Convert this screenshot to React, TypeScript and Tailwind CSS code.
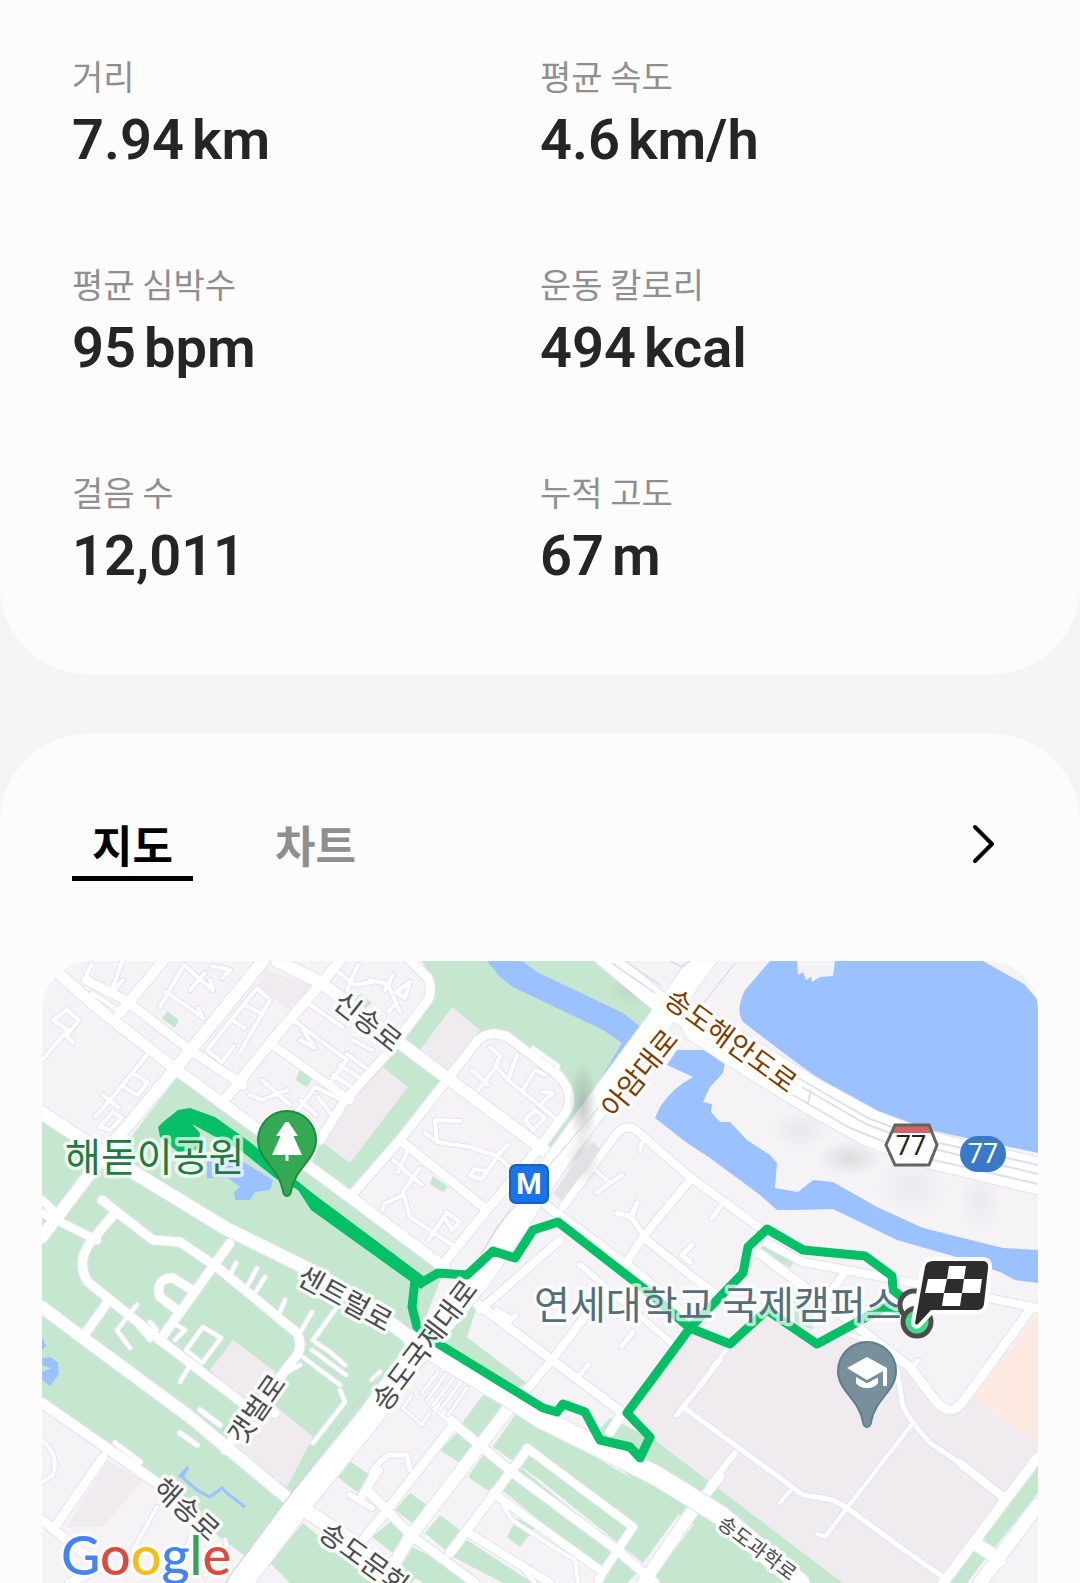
import { useState } from 'react';

type Tab = '지도' | '차트';

type Stat = { label: string; value: string; unit?: string };

const stats: Stat[] = [
  { label: '거리', value: '7.94', unit: 'km' },
  { label: '평균 속도', value: '4.6', unit: 'km/h' },
  { label: '평균 심박수', value: '95', unit: 'bpm' },
  { label: '운동 칼로리', value: '494', unit: 'kcal' },
  { label: '걸음 수', value: '12,011' },
  { label: '누적 고도', value: '67', unit: 'm' },
];

const tabs: Tab[] = ['지도', '차트'];

// Areas, drawn in this order
const parks = [
  'M42 1118L112 1162L177 1077L445 1268L415 1345L250 1560L42 1403Z',
  'M422 961H603L655 1003L660 1020L560 1160L545 1150L570 1110Q578 1090 558 1073L506 1034L480 1038L420 1053L403 1043L430 1000L432 980Z',
  'M383 1057L400 1047L447 1080L350 1200L310 1167L322 1140Z',
  'M478 1303L467 1337L527 1383L513 1390L440 1340L455 1305Z',
  'M610 1418L655 1440L710 1482L843 1583H790L655 1500L590 1440Z',
  'M483 1395L503 1403L480 1440L462 1423Z',
  'M517 1412L683 1508L643 1563L540 1480L493 1447Z',
  'M520 1467L617 1547L600 1570L502 1490Z',
  'M457 1433L483 1452L467 1468L440 1450Z',
  'M483 1455L507 1473L490 1492L468 1477Z',
  'M410 1493L430 1507L415 1525L395 1510Z',
  'M440 1515L460 1530L445 1550L425 1533Z',
  'M390 1522L408 1533L393 1553L372 1537Z',
  'M413 1547L480 1583H390Z',
  'M467 1540L533 1583H503L453 1557Z',
  'M517 1518L535 1528L520 1547L507 1537Z',
  'M617 1557L637 1573L627 1583H603Z',
  'M697 1520L710 1513L797 1583H650Z',
  'M303 1523L327 1543L380 1583H290L270 1563Z',
  'M1038 1460L982 1537L993 1550L1038 1493Z',
  'M977 1548L988 1555L967 1583H943Z',
  'M768 1238L797 1257L790 1268L760 1250Z',
  'M793 1292L815 1310L812 1330L795 1322Z',
  'M167 1011L179 1020L175 1028L162 1019Z',
  'M300 1070L312 1079L307 1087L295 1080Z',
  'M433 1176L448 1187L443 1192L430 1184Z',
  'M348 1460L370 1475L358 1493L338 1477Z',
  'M360 994L372 1003L366 1008L355 1000Z',
];

const greyBlocks = [
  'M265 970L312 985L290 1010L257 985Z',
  'M383 1067L408 1087L350 1163L322 1142L345 1108Z',
  'M452 1007L480 1030L447 1072L420 1050Z',
  'M233 1340L277 1373L243 1403L210 1370Z',
  'M277 1407L313 1437L287 1487L230 1450L243 1420Z',
  'M107 1460L143 1480L103 1527L67 1527Z',
  'M690 1333L730 1345L767 1313L817 1345L860 1333L910 1367L935 1400Q950 1415 960 1405L973 1397L1038 1445V1457L943 1583H843L655 1440L627 1413Z',
];

const water = [
  'M487 961H522L537 972L623 1013L647 1032L630 1053L607 1080L601 1078L622 1043L603 1030L513 987L500 977Z',
  'M770 961L745 990Q735 1010 743 1022L793 1060L853 1103L890 1120L943 1133L1038 1153V1000L1024 984L983 961Z',
  'M677 1050H720L725 1060L723 1073L710 1087L703 1102L712 1104L711 1112L720 1122H730L747 1140L770 1155L777 1163L775 1188L798 1192L813 1180L833 1182L877 1207L923 1228L1003 1248L1038 1250V1283L1015 1280L1000 1272L960 1258L897 1240L833 1209L797 1210H777L760 1195L710 1158L687 1143L655 1118L660 1107Q672 1088 693 1077L667 1065Z',
  'M207 1160L213 1155L240 1160L273 1180L270 1190L255 1192L250 1200H235L234 1192L240 1187L228 1178H207Z',
  'M42 1337L46 1346L42 1350ZM42 1358L50 1357L58 1362L59 1374L50 1386L42 1380V1372L51 1368L42 1365Z',
  'M388 1250L396 1254V1258L388 1254Z',
];

// [path, width]
const roads: [string, number][] = [
  // small streets
  ['M42 1060L68 1030L53 1020L67 1010L79 1020L66 1036L73 1043', 4],
  ['M100 1127L112 1112L122 1118L110 1130ZM95 1117L110 1100L147 1055M125 1088L138 1095L148 1082L132 1073M103 1095L118 1107', 4],
  ['M92 964L86 976L110 995L123 980M92 993L118 1010M122 962L112 990', 4],
  ['M182 968L160 1007M165 992L187 1006L203 1018L198 1008M184 965L195 975L213 990L210 980M190 990L205 973M212 966L230 970L222 978', 4],
  ['M207 1050L257 988L270 1000L240 1052M207 1050L222 1062L234 1046M232 1020L245 1028M243 1004L262 1014', 4],
  ['M308 1003L342 1027M293 1020L347 1060L330 1083M303 1030L315 1048L300 1040M333 1075L350 1086M340 1065L360 1078M347 1054L366 1068M353 1040L372 1050', 4],
  ['M250 1095L262 1100L287 1090M262 1080L290 1105M293 1117L315 1087L342 1100M300 1100L316 1115M318 1097L330 1113', 4],
  ['M333 968L355 985L372 982M347 990L358 965M370 980L388 984L400 1012M393 975L385 990M396 992L410 982L405 998ZM388 1012L395 1005', 4],
  ['M490 1047L500 1056L495 1068L478 1090M472 1070L488 1085M495 1065L508 1080L555 1118M517 1055L508 1080M523 1090L535 1070L545 1075M540 1105L553 1093L542 1092M525 1120L535 1110L545 1118L533 1130Z', 4],
  ['M533 1048L558 1066L556 1074', 4],
  ['M425 1133L437 1142L435 1120L460 1121M437 1142L470 1147L497 1156L515 1172M508 1145L496 1157M495 1160L482 1179L470 1176L474 1169L485 1171', 4],
  ['M393 1160L422 1185M408 1150L398 1172M420 1168L403 1192L410 1217L455 1247M403 1195L384 1204L382 1210M446 1212L460 1222L452 1230L446 1220M445 1216L428 1240', 4],
  ['M593 1168L610 1183L622 1175M610 1183L596 1193M642 1143L640 1150', 4],
  ['M617 1213L631 1217L637 1203M631 1217L645 1237M712 1218L720 1207M690 1262L682 1255L692 1245', 5],
  ['M516 1315L507 1323L497 1310L510 1318M588 1365L578 1377M633 1332L622 1346', 5],
  ['M137 1305L117 1330L130 1348M137 1305L128 1315L150 1340M150 1322L157 1330', 4],
  ['M203 1327L221 1338L202 1363L186 1350ZM175 1340L185 1330L172 1322M190 1365L180 1382', 4],
  ['M303 1357L340 1385M312 1350L346 1375M315 1342L330 1352L345 1365M288 1372L300 1365', 4],
  ['M340 1390L345 1402L313 1443', 4],
  ['M257 1268L247 1287M265 1277L255 1293M236 1263L230 1275M285 1300L280 1312M312 1312L300 1333M335 1310L313 1340', 4],
  ['M200 1410L220 1425M180 1433L197 1445M115 1443L140 1462L136 1468', 5],
  ['M42 1440Q60 1455 53 1475L42 1482', 4],
  ['M157 1507L133 1550M193 1533L170 1583M225 1540Q232 1560 205 1575', 4],
  ['M372 1483L372 1470L388 1455L407 1455L410 1470', 5],
  ['M372 1380L380 1372M360 1495L380 1460', 4],
  ['M503 1505L512 1520L550 1545L575 1560L578 1583M490 1547L515 1560L535 1583', 4],
  // campus paths
  ['M720 1360L677 1415M683 1407L803 1495L833 1500L847 1508L900 1547L943 1577', 5],
  ['M790 1491L780 1503M913 1423L847 1508L825 1537L818 1534', 4],
  ['M897 1370L903 1407L913 1423L930 1443L960 1463', 5],
  ['M730 1345L712 1368M845 1333L880 1345M912 1368L918 1360', 4],
  ['M960 1463L1003 1497', 8],
  ['M735 1453L710 1485', 6],
  // blocks
  ['M60 975L100 1010L173 1067L350 1197L445 1268', 11],
  ['M86 980L125 1000L190 1050L243 1085', 9],
  ['M263 961L177 1067L113 1143L42 1237', 12],
  ['M163 961L120 1013', 10],
  ['M340 961L270 1043L227 1097', 10],
  ['M277 961L320 982L400 1043L447 1078L540 1147L560 1163', 12],
  ['M408 958L428 978Q433 990 428 1000L390 1050L343 1103L320 1140', 9],
  ['M270 1043L350 1100', 8],
  ['M350 1197L400 1140L447 1080L478 1040Q490 1030 506 1036L558 1075Q576 1095 566 1112L540 1147L487 1210L440 1268', 9],
  ['M400 1140L487 1210', 9],
  ['M563 1207L617 1133Q627 1123 637 1131L690 1177L760 1228', 8],
  ['M690 1180L643 1237L627 1262', 8],
  ['M543 1203L643 1277L690 1320', 9],
  ['M643 1237L690 1275L720 1297', 8],
  ['M470 1298L552 1360L623 1413L610 1432', 9],
  ['M560 1240L480 1310M605 1290L552 1360L505 1415', 8],
  ['M580 1265L680 1350', 6],
  ['M740 1270L755 1250L855 1325L910 1367L935 1400Q950 1418 962 1403L1030 1310', 9],
  ['M767 1243L803 1262L883 1277L1038 1308M843 1275L825 1300', 8],
  ['M720 1297L680 1345', 8],
  ['M515 1400L410 1537L383 1583', 12],
  ['M455 1423L387 1510L363 1540', 9],
  ['M527 1450L450 1553', 9],
  ['M430 1400L453 1423L513 1473L617 1550L655 1583', 9],
  ['M527 1448L633 1527L598 1580', 8],
  ['M493 1493L600 1570', 8],
  ['M370 1493L413 1537L475 1583', 9],
  ['M467 1532L550 1583', 8],
  ['M693 1510L643 1583', 12],
  ['M720 1477L697 1505', 9],
  ['M1038 1457L943 1583', 10],
  ['M1038 1505L980 1583M975 1543L1000 1560', 13],
  ['M42 1307L83 1338L190 1417L290 1500', 12],
  ['M115 1213L92 1240Q75 1262 88 1282L160 1340L245 1405L275 1413', 9],
  ['M42 1213L97 1240M60 1217L42 1200', 8],
  ['M102 1200L127 1220L153 1240L180 1242L217 1267L297 1333Q303 1345 297 1355L225 1450', 9],
  ['M230 1243L160 1340M107 1303L83 1337', 9],
  ['M177 1310L160 1297Q155 1278 173 1278L192 1290', 9],
  ['M42 1403L157 1483L190 1513', 10],
  ['M103 1457L53 1530M42 1520L100 1567L70 1583', 9],
  ['M350 1495L372 1508M360 1500L380 1470', 6],
];

const mainRoads: [string, number][] = [
  ['M42 1113L80 1138L130 1170L225 1228L310 1270L360 1300L413 1340', 13],
  ['M413 1340L505 1395L540 1418L655 1475L720 1515L800 1583', 19],
  ['M295 1503L350 1540L400 1583', 14],
  ['M603 955L663 1005L710 1030', 20],
  ['M700 1025L745 1055L810 1095L870 1128L930 1150L1038 1176', 36],
  ['M710 950L660 1020L590 1115L550 1170L515 1225L480 1277L413 1357L370 1417L297 1507L240 1583', 24],
];

type MapLabel = { text: string; x: number; y: number; angle: number; size: number; color: string };

const mapLabels: MapLabel[] = [
  { text: '신송로', x: 369, y: 1020, angle: 38, size: 28, color: '#4a4c52' },
  { text: '센트럴로', x: 346, y: 1297, angle: 29, size: 28, color: '#4a4c52' },
  { text: '송도국제대로', x: 423, y: 1344, angle: -53, size: 28, color: '#4a4c52' },
  { text: '갯벌로', x: 255, y: 1408, angle: -55, size: 28, color: '#4a4c52' },
  { text: '해송로', x: 188, y: 1508, angle: 42, size: 28, color: '#4a4c52' },
  { text: '송도문화로', x: 376, y: 1565, angle: 36, size: 28, color: '#4a4c52' },
  { text: '송도과학로', x: 758, y: 1547, angle: 37, size: 20, color: '#4a4c52' },
  { text: '송도해안도로', x: 732, y: 1039, angle: 36, size: 28, color: '#7b3f00' },
  { text: '아암대로', x: 638, y: 1072, angle: -51, size: 28, color: '#7b3f00' },
];

const googleLetters = [
  ['G', '#4384f4'],
  ['o', '#dd4b3e'],
  ['o', '#f5bc1a'],
  ['g', '#4384f4'],
  ['l', '#35a456'],
  ['e', '#dd4b3e'],
];

const pinPath = 'M0 56C-2 56-4 54-4 51C-8 28-29 20-29 0A29 29 0 0 1 29 0C29 20 8 28 4 51C4 54 2 56 0 56Z';

const RoadLayer = ({ items }: { items: [string, number][] }) => (
  <g fill="none" strokeLinecap="round" strokeLinejoin="round">
    {items.map(([d, w]) => (
      <path key={d} d={d} stroke="#e1e4ed" strokeWidth={w + 2} />
    ))}
    {items.map(([d, w]) => (
      <path key={d} d={d} stroke="#ffffff" strokeWidth={w} />
    ))}
  </g>
);

const RouteMap = () => (
  <svg
    viewBox="42 961 996 622"
    role="img"
    aria-label="운동 경로 지도"
    className="block w-full rounded-t-[50px] font-['Noto_Sans_CJK_KR',sans-serif]"
  >
    <defs>
      <radialGradient id="hill">
        <stop offset="0" stopColor="#808a86" stopOpacity="0.45" />
        <stop offset="1" stopColor="#808a86" stopOpacity="0" />
      </radialGradient>
    </defs>
    <rect x="42" y="961" width="996" height="622" fill="#f6f3f7" />
    <path d={parks.join('')} fill="#c6e7cf" />
    <path d={greyBlocks.join('')} fill="#efebef" />
    <path d="M1038 1312L973 1397L1038 1445Z" fill="#fdeae3" />
    <path d={water.join('')} fill="#9cc1ff" />
    <path d="M797 961L798 975L803 972L806 980L811 977L812 982L820 977L833 976L835 961Z" fill="#f3f3f5" />
    <path
      d="M179 1477L188 1467L182 1477L197 1490L210 1497L222 1488L228 1494L245 1507"
      fill="none"
      stroke="#9cc1ff"
      strokeWidth="3"
    />

    <ellipse cx="800" cy="1130" rx="30" ry="20" fill="url(#hill)" opacity="0.25" />
    <ellipse cx="850" cy="1158" rx="32" ry="18" fill="url(#hill)" opacity="0.5" />
    <ellipse cx="912" cy="1187" rx="36" ry="32" fill="url(#hill)" opacity="0.2" />
    <ellipse cx="980" cy="1200" rx="22" ry="32" fill="url(#hill)" opacity="0.2" />
    <ellipse cx="633" cy="991" rx="26" ry="14" fill="url(#hill)" opacity="0.4" />

    <RoadLayer items={roads} />
    {/* Parking lot */}
    <g fill="none" strokeLinecap="round">
      <path
        d="M438 1372L422 1393M446 1374L427 1400M454 1378L433 1405M461 1382L440 1410M467 1388L448 1415M412 1395L403 1408L422 1425L430 1412"
        stroke="#e1e4ed"
        strokeWidth="5"
      />
      <path
        d="M438 1372L422 1393M446 1374L427 1400M454 1378L433 1405M461 1382L440 1410M467 1388L448 1415M412 1395L403 1408L422 1425L430 1412"
        stroke="#ffffff"
        strokeWidth="3"
      />
    </g>

    <RoadLayer items={mainRoads} />
    <ellipse cx="583" cy="1105" rx="15" ry="44" fill="url(#hill)" />
    <ellipse cx="583" cy="1160" rx="18" ry="26" fill="url(#hill)" opacity="0.7" />
    <path d="M562 1200L553 1194L580 1155L594 1142L600 1150Z" fill="#e2e2e4" />
    <g stroke="#dfe1ea" strokeWidth="2" fill="none">
      <path d="M798 1078L870 1119L930 1141L1038 1165" />
      <path d="M802 1087L866 1124L930 1148L1038 1174" />
      <path d="M793 1095L850 1128L925 1158L1038 1184" />
      <path d="M811 1090L808 1103" />
      <path d="M612 963L655 993M625 961L660 985M670 961L682 967L690 961" />
    </g>
    <g stroke="#cfd0d6" strokeWidth="1" fill="none">
      <path d="M599 1107L497 1227L470 1275" />
      <path d="M378 1375L247 1553L225 1583" />
      <path d="M735 963L700 1008" />
    </g>

    {/* Recorded route */}
    <g fill="none" stroke="#04bf65" strokeWidth="9" strokeLinejoin="round" strokeLinecap="round">
      <path d="M421 1283L438 1273L467 1275L493 1251L515 1258L533 1230L558 1222L643 1288L690 1328L627 1413L650 1437L640 1458L630 1447L600 1440L585 1412L563 1404L557 1412L543 1408L437 1343L417 1327L412 1307L415 1280" />
      <path d="M690 1328L743 1273L748 1247L767 1229L803 1250L865 1256L892 1276L893 1290L908 1302" />
      <path d="M690 1328L730 1344L767 1310L817 1344L885 1307L908 1312" />
    </g>
    <path
      d="M158 1127L163 1122L178 1110L190 1108L215 1117L250 1142L290 1175L300 1183L311 1192L430 1281L421 1289L311 1210L298 1190L275 1178L240 1150L212 1135L192 1124L200 1133L198 1150L178 1152L160 1137Z"
      fill="#04bf65"
    />

    {/* Place names */}
    <g stroke="#ffffff" strokeOpacity="0.7" strokeWidth="7" strokeLinejoin="round" paintOrder="stroke">
      <text x="65" y="1171" fontSize="39" fill="#217a41">
        해돋이공원
      </text>
      <text x="534" y="1319" fontSize="39" fill="#546e7a">
        연세대학교 국제캠퍼스
      </text>
      {mapLabels.map((l) => (
        <text
          key={l.text}
          x={l.x}
          y={l.y}
          fontSize={l.size}
          fill={l.color}
          strokeOpacity="0.85"
          textAnchor="middle"
          dominantBaseline="central"
          transform={`rotate(${l.angle} ${l.x} ${l.y})`}
        >
          {l.text}
        </text>
      ))}
    </g>

    {/* Metro */}
    <rect x="510" y="1165" width="38" height="38" rx="6" fill="#1a73e8" stroke="#1560c4" strokeWidth="2" />
    <text x="529" y="1194" fontSize="29" fontWeight="700" fill="#ffffff" textAnchor="middle" className="font-[Roboto,sans-serif]">
      M
    </text>

    {/* Route shields */}
    <path d="M895 1125H929L937 1145L929 1165H895L886 1145Z" fill="#ffffff" />
    <path d="M895 1125H929L933 1133H891Z" fill="#d26464" />
    <path d="M895 1125H929L937 1145L929 1165H895L886 1145Z" fill="none" stroke="#636363" strokeWidth="3" />
    <rect x="960" y="1136" width="46" height="36" rx="18" fill="#3a78c8" />
    <g fontSize="27" textAnchor="middle" className="font-[Roboto,sans-serif]">
      <text x="911" y="1155" fill="#202124">
        77
      </text>
      <text x="983" y="1163" fill="#ffffff">
        77
      </text>
    </g>

    {/* Park pin */}
    <g transform="translate(287 1140)">
      <path d={pinPath} fill="#34a853" stroke="#1e8e3e" strokeWidth="2" />
      <path d="M-1.500-18H1.500L11-4H6.500L15 15H1.500V21H-1.500V15H-15L-6.500-4H-11Z" fill="#ffffff" />
    </g>

    {/* University pin */}
    <g transform="translate(867 1371)">
      <path d={pinPath} fill="#78909c" stroke="#607d8b" strokeWidth="2" />
      <path d="M-20-3L0-14L20-3V15H16V0L0 9Z" fill="#ffffff" />
      <path d="M-11 6L0 12L11 6V12Q8 17 0 17Q-8 17-11 12Z" fill="#ffffff" />
      <path d="M-12 4L0 11L13 4" fill="none" stroke="#78909c" strokeWidth="2" />
    </g>

    {/* Start and finish */}
    <circle cx="914" cy="1305" r="14" fill="#ffffff" stroke="#4c4c4c" strokeWidth="5" />
    <circle cx="917" cy="1322" r="14" fill="#45d98b" stroke="#4c4c4c" strokeWidth="5" />
    <path
      d="M933 1261H982Q989 1261 988 1268L984 1304Q983 1310 977 1310H931L918 1324Q916 1326 915 1323L925 1267Q926 1261 933 1261Z"
      fill="#2d2d2d"
      stroke="#ffffff"
      strokeWidth="8"
      strokeLinejoin="round"
      paintOrder="stroke"
    />
    <path
      d="M949 1266H966L964 1279H947ZM928 1279H947L944 1293H925ZM964 1279H982L980 1293H962ZM944 1293H962L960 1306H942Z"
      fill="#ffffff"
    />

    <text
      x="61"
      y="1575"
      fontSize="54"
      stroke="#ffffff"
      strokeOpacity="0.7"
      strokeWidth="6"
      paintOrder="stroke"
      className="font-[Lato,sans-serif] font-medium"
    >
      {googleLetters.map(([letter, color], i) => (
        <tspan key={i} fill={color}>
          {letter}
        </tspan>
      ))}
    </text>
  </svg>
);

const App = () => {
  const [activeTab, setActiveTab] = useState<Tab>('지도');

  return (
    <main className="flex flex-col gap-[60px] bg-[#f5f5f5] font-['Noto_Sans_CJK_KR',sans-serif]">
      {/* Workout summary */}
      <section className="rounded-b-[88px] bg-[#fcfcfc] px-[72px] pt-14 pb-[82px]">
        <dl className="grid grid-cols-2 gap-y-[88px]">
          {stats.map((stat) => (
            <div key={stat.label}>
              <dt className="text-[34px] leading-[40px] text-[#8f8f8f]">{stat.label}</dt>
              <dd className="mt-2 flex gap-2 font-[Roboto,sans-serif] text-[56px] leading-[72px] font-semibold text-[#252525]">
                <span>{stat.value}</span>
                {stat.unit && <span>{stat.unit}</span>}
              </dd>
            </div>
          ))}
        </dl>
      </section>

      {/* Map and chart */}
      <section className="rounded-t-[88px] bg-[#fcfcfc] px-[42px] pt-20">
        <div className="flex items-start justify-between pr-8 pl-[30px]">
          <div className="flex gap-[62px]">
            {tabs.map((tab) => (
              <button
                key={tab}
                type="button"
                aria-pressed={activeTab === tab}
                onClick={() => setActiveTab(tab)}
                className={`border-b-5 px-5 pb-0.5 text-[44px] leading-[60px] font-bold ${
                  activeTab === tab ? 'border-black text-black' : 'border-transparent text-[#8f8f8f]'
                }`}
              >
                {tab}
              </button>
            ))}
          </div>
          <button type="button" aria-label="자세히 보기" className="flex h-[60px] w-11 items-center justify-center">
            <svg viewBox="0 0 24 40" className="h-10 w-6" fill="none" stroke="#000000" strokeWidth="4" strokeLinecap="round" strokeLinejoin="round">
              <path d="M3 3L20 20L3 37" />
            </svg>
          </button>
        </div>
        <div className="mt-20">
          <RouteMap />
        </div>
      </section>
    </main>
  );
};

export default App;
